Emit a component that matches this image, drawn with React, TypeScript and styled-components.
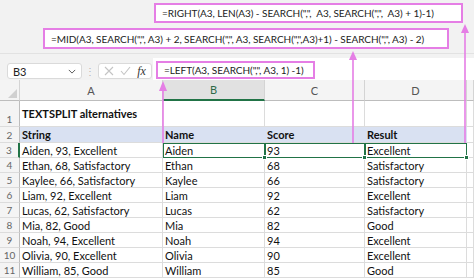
import React from 'react';
import styled, { createGlobalStyle } from 'styled-components';

const GlobalStyle = createGlobalStyle`
  html, body {
    margin: 0;
    padding: 0;
    background: #ffffff;
  }
  * {
    box-sizing: border-box;
  }
`;

const PINK = '#e57ee5';
const GREEN = '#217346';

const rows = [
  ['Aiden, 93, Excellent', 'Aiden', '93', 'Excellent'],
  ['Ethan, 68, Satisfactory', 'Ethan', '68', 'Satisfactory'],
  ['Kaylee, 66, Satisfactory', 'Kaylee', '66', 'Satisfactory'],
  ['Liam, 92, Excellent', 'Liam', '92', 'Excellent'],
  ['Lucas, 62, Satisfactory', 'Lucas', '62', 'Satisfactory'],
  ['Mia, 82, Good', 'Mia', '82', 'Good'],
  ['Noah, 94, Excellent', 'Noah', '94', 'Excellent'],
  ['Olivia, 90, Excellent', 'Olivia', '90', 'Excellent'],
  ['William, 85, Good', 'William', '85', 'Good'],
];

export default function App() {
  return (
    <Page>
      <GlobalStyle />
      <Ribbon>
        <Callout $left={154} $width={309} $height={20}>
          =RIGHT(A3, LEN(A3) - SEARCH(",", &nbsp;A3, SEARCH(",", &nbsp;A3) + 1)-1)
        </Callout>
        <Callout $left={43} $width={406} $height={21}>
          =MID(A3, SEARCH(",", A3) + 2, SEARCH(",", A3, SEARCH(",",A3)+1) - SEARCH(",", A3) - 2)
        </Callout>
      </Ribbon>

      <FormulaBar>
        <NameBox>
          <span>B3</span>
          <Chevron viewBox="0 0 10 6">
            <path d="M1 1 L5 5 L9 1" fill="none" stroke="#555" strokeWidth="1.2" />
          </Chevron>
        </NameBox>
        <Grip>⋮</Grip>
        <FxBox>
          <svg width="10" height="10" viewBox="0 0 10 10">
            <path d="M1 1 L9 9 M9 1 L1 9" stroke="#c4c4c4" strokeWidth="1.1" />
          </svg>
          <svg width="11" height="10" viewBox="0 0 11 10">
            <path d="M1 5 L4 8.5 L10 1" fill="none" stroke="#c4c4c4" strokeWidth="1.1" />
          </svg>
          <Fx>fx</Fx>
        </FxBox>
        <FormulaInput>
          <Callout $left={3} $width={159} $height={18}>
            =LEFT(A3, SEARCH(",", A3, 1) -1)
          </Callout>
        </FormulaInput>
      </FormulaBar>

      <Sheet>
        <Corner>
          <CornerMark />
        </Corner>
        <ColHead>A</ColHead>
        <ColHead $active>B</ColHead>
        <ColHead>C</ColHead>
        <ColHead>D</ColHead>
        <ColHead />

        <RowHead $bottom>1</RowHead>
        <Cell $bold>TEXTSPLIT alternatives</Cell>
        <Cell />
        <Cell />
        <Cell />
        <Cell />

        <RowHead>2</RowHead>
        <Cell $bold $band>String</Cell>
        <Cell $bold $band>Name</Cell>
        <Cell $bold $band>Score</Cell>
        <Cell $bold $band>Result</Cell>
        <Cell />

        {rows.map((r, i) => (
          <React.Fragment key={i}>
            <RowHead $active={i === 0}>{i + 3}</RowHead>
            <Cell>{r[0]}</Cell>
            <Cell $selected={i === 0}>{r[1]}{i === 0 && <Handle />}</Cell>
            <Cell $selected={i === 0}>{r[2]}{i === 0 && <Handle />}</Cell>
            <Cell $selected={i === 0}>{r[3]}{i === 0 && <Handle />}</Cell>
            <Cell />
          </React.Fragment>
        ))}
      </Sheet>

      <Arrows width="474" height="278" viewBox="0 0 474 278">
        <g stroke={PINK} strokeWidth="1.6" fill={PINK}>
          <line x1="465" y1="30" x2="465" y2="143" />
          <polygon points="465,24 461,33 469,33" stroke="none" />
          <line x1="353" y1="57" x2="353" y2="143" />
          <polygon points="353,51 349,60 357,60" stroke="none" />
          <line x1="163" y1="87" x2="163" y2="143" />
          <polygon points="163,81 159,91 167,91" stroke="none" />
        </g>
      </Arrows>
    </Page>
  );
}

const Page = styled.div`
  position: relative;
  width: 474px;
  height: 278px;
  overflow: hidden;
  background: #ffffff;
  font-family: Lato, 'Liberation Sans', sans-serif;
`;

const Ribbon = styled.div`
  height: 54px;
  padding-top: 3px;
  background: #f2f2f2;
  border-bottom: 1px solid #e2e2e2;
  display: flex;
  flex-direction: column;
  gap: 5px;
`;

const Callout = styled.div<{ $left: number; $width: number; $height: number }>`
  margin-left: ${p => p.$left}px;
  width: ${p => p.$width}px;
  height: ${p => p.$height}px;
  border: 2px solid ${PINK};
  background: #ffffff;
  display: flex;
  align-items: center;
  padding-left: 6px;
  font-size: 10px;
  letter-spacing: -0.05px;
  color: #222;
  white-space: nowrap;
  overflow: hidden;
`;

const FormulaBar = styled.div`
  height: 26px;
  background: #f2f2f2;
  display: flex;
  align-items: flex-end;
`;

const NameBox = styled.div`
  margin-left: 7px;
  margin-bottom: 1px;
  width: 75px;
  height: 16px;
  background: #ffffff;
  border: 1px solid #dadada;
  border-radius: 3px;
  display: flex;
  align-items: center;
  justify-content: space-between;
  padding: 0 5px 0 5px;
  font-size: 11px;
  color: #222;
`;

const Chevron = styled.svg`
  width: 8px;
  height: 5px;
`;

const Grip = styled.div`
  width: 16px;
  height: 18px;
  text-align: center;
  font-size: 10px;
  color: #b5b5b5;
  line-height: 18px;
`;

const FxBox = styled.div`
  width: 54px;
  height: 16px;
  margin-bottom: 1px;
  background: #ffffff;
  border: 1px solid #dadada;
  border-radius: 3px;
  display: flex;
  align-items: center;
  justify-content: space-around;
  padding: 0 2px;
`;

const Fx = styled.span`
  font-family: 'Liberation Serif', serif;
  font-style: italic;
  font-size: 12px;
  color: #333;
`;

const FormulaInput = styled.div`
  flex: 1;
  margin-left: 1px;
  height: 22px;
  background: #ffffff;
  padding-top: 3px;
`;

const Sheet = styled.div`
  display: grid;
  grid-template-columns: 20px 143px 102px 100px 102px 1fr;
  grid-template-rows: 21px 26px 16px repeat(9, 15px);
  font-size: 11px;
`;

const Corner = styled.div`
  position: relative;
  background: #f4f4f4;
  border-right: 1px solid #d4d4d4;
  border-bottom: 1px solid #bdbdbd;
`;

const CornerMark = styled.div`
  position: absolute;
  right: 2px;
  bottom: 2px;
  width: 0;
  height: 0;
  border-left: 9px solid transparent;
  border-bottom: 9px solid #d0d0d0;
`;

const ColHead = styled.div<{ $active?: boolean }>`
  background: ${p => (p.$active ? '#e1e1e1' : '#f4f4f4')};
  border-right: 1px solid #d4d4d4;
  border-bottom: ${p => (p.$active ? `2px solid ${GREEN}` : '1px solid #bdbdbd')};
  color: ${p => (p.$active ? '#2f6a48' : '#555')};
  display: flex;
  align-items: center;
  justify-content: center;
  font-size: 11px;
`;

const RowHead = styled.div<{ $bottom?: boolean; $active?: boolean }>`
  background: #f4f4f4;
  border-bottom: 1px solid #dcdcdc;
  border-right: ${p => (p.$active ? `2px solid ${GREEN}` : '1px solid #bdbdbd')};
  color: #666;
  display: flex;
  align-items: ${p => (p.$bottom ? 'flex-end' : 'center')};
  justify-content: center;
  padding-bottom: ${p => (p.$bottom ? '1px' : '0')};
  font-size: 10px;
`;

const Cell = styled.div<{ $bold?: boolean; $band?: boolean; $selected?: boolean }>`
  position: relative;
  background: ${p => (p.$band ? '#d9e1f2' : '#ffffff')};
  border-right: 1px solid ${p => (p.$band ? '#d9e1f2' : '#dcdcdc')};
  border-bottom: 1px solid #dcdcdc;
  ${p => (p.$selected ? `outline: 1.5px solid ${GREEN}; outline-offset: -1px;` : '')}
  display: flex;
  align-items: center;
  padding-left: 2px;
  font-weight: ${p => (p.$bold ? 700 : 400)};
  color: #111;
  white-space: nowrap;
`;

const Handle = styled.div`
  position: absolute;
  right: -3px;
  bottom: -3px;
  width: 5px;
  height: 5px;
  background: ${GREEN};
  border: 1px solid #ffffff;
  z-index: 1;
`;

const Arrows = styled.svg`
  position: absolute;
  left: 0;
  top: 0;
  pointer-events: none;
`;
